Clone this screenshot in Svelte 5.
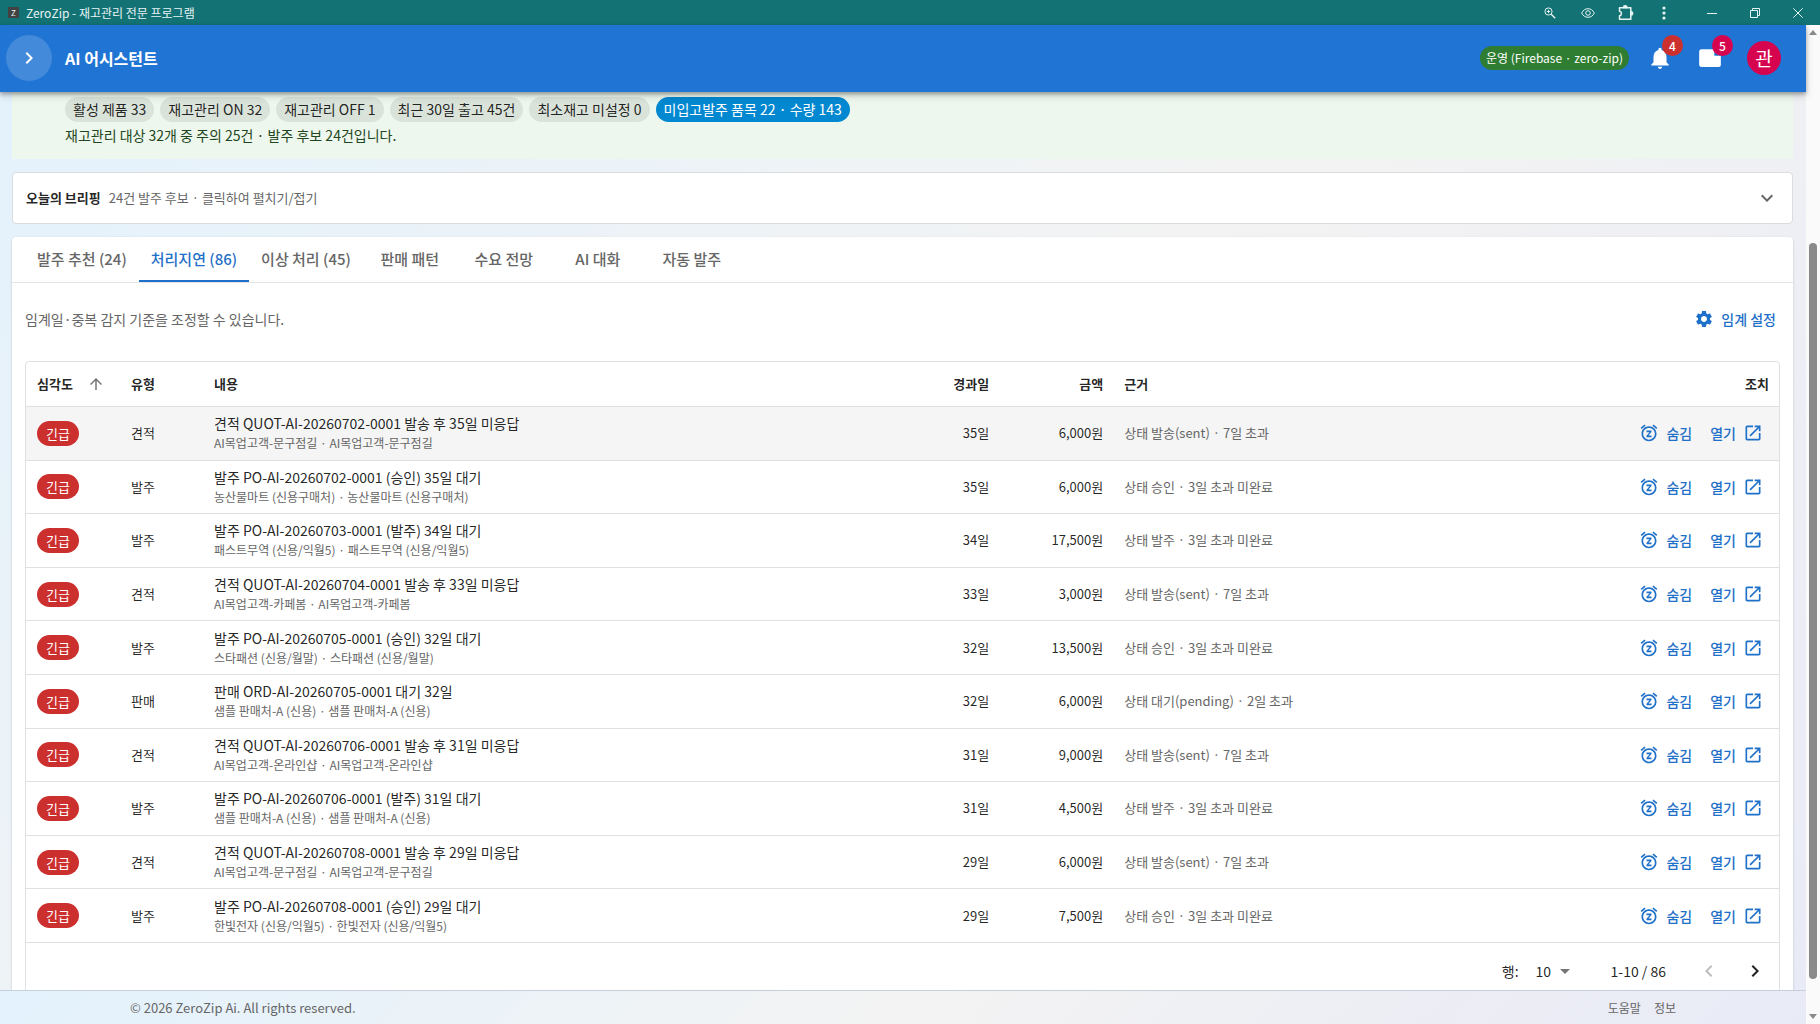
<script lang="ts">
  type Row = {
    kind: string;
    title: string;
    sub: string;
    days: number;
    amount: string;
    reason: string;
  };

  const rows: Row[] = [
    { kind: '견적', title: '견적 QUOT-AI-20260702-0001 발송 후 35일 미응답', sub: 'AI목업고객-문구점길 · AI목업고객-문구점길', days: 35, amount: '6,000원', reason: '상태 발송(sent) · 7일 초과' },
    { kind: '발주', title: '발주 PO-AI-20260702-0001 (승인) 35일 대기', sub: '농산물마트 (신용구매처) · 농산물마트 (신용구매처)', days: 35, amount: '6,000원', reason: '상태 승인 · 3일 초과 미완료' },
    { kind: '발주', title: '발주 PO-AI-20260703-0001 (발주) 34일 대기', sub: '패스트무역 (신용/익월5) · 패스트무역 (신용/익월5)', days: 34, amount: '17,500원', reason: '상태 발주 · 3일 초과 미완료' },
    { kind: '견적', title: '견적 QUOT-AI-20260704-0001 발송 후 33일 미응답', sub: 'AI목업고객-카페봄 · AI목업고객-카페봄', days: 33, amount: '3,000원', reason: '상태 발송(sent) · 7일 초과' },
    { kind: '발주', title: '발주 PO-AI-20260705-0001 (승인) 32일 대기', sub: '스타패션 (신용/월말) · 스타패션 (신용/월말)', days: 32, amount: '13,500원', reason: '상태 승인 · 3일 초과 미완료' },
    { kind: '판매', title: '판매 ORD-AI-20260705-0001 대기 32일', sub: '샘플 판매처-A (신용) · 샘플 판매처-A (신용)', days: 32, amount: '6,000원', reason: '상태 대기(pending) · 2일 초과' },
    { kind: '견적', title: '견적 QUOT-AI-20260706-0001 발송 후 31일 미응답', sub: 'AI목업고객-온라인샵 · AI목업고객-온라인샵', days: 31, amount: '9,000원', reason: '상태 발송(sent) · 7일 초과' },
    { kind: '발주', title: '발주 PO-AI-20260706-0001 (발주) 31일 대기', sub: '샘플 판매처-A (신용) · 샘플 판매처-A (신용)', days: 31, amount: '4,500원', reason: '상태 발주 · 3일 초과 미완료' },
    { kind: '견적', title: '견적 QUOT-AI-20260708-0001 발송 후 29일 미응답', sub: 'AI목업고객-문구점길 · AI목업고객-문구점길', days: 29, amount: '6,000원', reason: '상태 발송(sent) · 7일 초과' },
    { kind: '발주', title: '발주 PO-AI-20260708-0001 (승인) 29일 대기', sub: '한빛전자 (신용/익월5) · 한빛전자 (신용/익월5)', days: 29, amount: '7,500원', reason: '상태 승인 · 3일 초과 미완료' },
  ];

  const tabs = ['발주 추천 (24)', '처리지연 (86)', '이상 처리 (45)', '판매 패턴', '수요 전망', 'AI 대화', '자동 발주'];
  const stats = ['활성 제품 33', '재고관리 ON 32', '재고관리 OFF 1', '최근 30일 출고 45건', '최소재고 미설정 0'];

  let activeTab = $state(1);
  let hovered = $state(0);
  let pageSize = $state('10');
</script>

<div class="window">
  <div class="titlebar">
    <span class="favicon">Z</span>
    <span class="window-title">ZeroZip - 재고관리 전문 프로그램</span>
    <div class="window-tools">
      <button type="button" aria-label="확대">
        <svg width="12" height="12" viewBox="0 0 12 12" fill="none" stroke="currentColor"><circle cx="4.5" cy="4.5" r="3.6" /><path d="M7.2 7.2 11.2 11.2" stroke-width="1.4" /><path d="M4.5 2.8v3.4M2.8 4.5h3.4" /></svg>
      </button>
      <button type="button" aria-label="보기">
        <svg width="14" height="12" viewBox="0 0 14 12" fill="none" stroke="currentColor"><path d="M.7 6C2 3.2 4.3 1.7 7 1.7S12 3.2 13.3 6C12 8.800 9.700 10.300 7 10.300S2 8.800.7 6z" /><circle cx="7" cy="6" r="2.300" /></svg>
      </button>
      <button type="button" aria-label="확장 프로그램">
        <svg width="16" height="16" viewBox="0 0 16 16" fill="none" stroke="currentColor" stroke-width="1.500"><path d="M1.500 2.700h11.300v11.600H1.500v-3.600c2.600-.4 2.600-4 0-4.400z" stroke-linejoin="round" /><path d="M5.500 2.500a1.700 1.700 0 0 1 3.400 0zM13 6.700a1.700 1.700 0 0 1 0 3.400z" fill="currentColor" /></svg>
      </button>
      <button type="button" aria-label="메뉴">
        <svg width="4" height="14" viewBox="0 0 4 14" fill="currentColor"><circle cx="2" cy="2" r="1.600" /><circle cx="2" cy="7" r="1.600" /><circle cx="2" cy="12" r="1.600" /></svg>
      </button>
    </div>
    <div class="window-controls">
      <button type="button" aria-label="최소화">
        <svg width="10" height="10" viewBox="0 0 10 10" fill="none" stroke="currentColor"><path d="M0 5.500h10" /></svg>
      </button>
      <button type="button" aria-label="이전 크기로">
        <svg width="10" height="10" viewBox="0 0 10 10" fill="none" stroke="currentColor"><path d="M.5 2.500h7v7h-7zM2.500 2.500v-2h7v7h-2" /></svg>
      </button>
      <button type="button" aria-label="닫기">
        <svg width="10" height="10" viewBox="0 0 10 10" fill="none" stroke="currentColor"><path d="M.3.3l9.400 9.400M9.700.3.3 9.700" /></svg>
      </button>
    </div>
  </div>

  <div class="viewport">
    <div class="page">
      <header class="appbar">
        <button class="menu-toggle" type="button" aria-label="메뉴 펼치기">
          <svg width="24" height="24" viewBox="0 0 24 24" fill="currentColor"><path d="M10 6 8.590 7.410 13.170 12l-4.580 4.590L10 18l6-6z" /></svg>
        </button>
        <h1>AI 어시스턴트</h1>
        <span class="env-chip">운영 (Firebase · zero-zip)</span>
        <button class="icon-button bell" type="button" aria-label="알림 4건">
          <svg width="26" height="26" viewBox="0 0 24 24" fill="currentColor"><path d="M12 22c1.100 0 2-.9 2-2h-4c0 1.100.890 2 2 2zm6-6v-5c0-3.070-1.640-5.640-4.500-6.320V4c0-.830-.670-1.500-1.500-1.500s-1.500.670-1.500 1.500v.680C7.630 5.360 6 7.920 6 11v5l-2 2v1h16v-1l-2-2z" /></svg>
          <span class="badge">4</span>
        </button>
        <button class="icon-button notes" type="button" aria-label="메모 5건">
          <svg width="26" height="26" viewBox="0 0 24 24" fill="currentColor"><path d="M4 4h12v6h6v8.500c0 1-.8 1.800-1.800 1.800H4c-1.100 0-2-.9-2-2V6c0-1.100.9-2 2-2z" /></svg>
          <span class="badge pink">5</span>
        </button>
        <button class="avatar" type="button">관</button>
      </header>

      <main>
        <section class="summary">
          <div class="chips">
            {#each stats as stat}
              <span class="chip">{stat}</span>
            {/each}
            <span class="chip info">미입고발주 품목 22 · 수량 143</span>
          </div>
          <p>재고관리 대상 32개 중 주의 25건 · 발주 후보 24건입니다.</p>
        </section>

        <button class="briefing" type="button">
          <strong>오늘의 브리핑</strong>
          <span>24건 발주 후보 · 클릭하여 펼치기/접기</span>
          <svg width="24" height="24" viewBox="0 0 24 24" fill="currentColor"><path d="M16.590 8.590 12 13.170 7.410 8.590 6 10l6 6 6-6z" /></svg>
        </button>

        <section class="panel">
          <div class="tabs" role="tablist">
            {#each tabs as tab, i}
              <button
                type="button"
                role="tab"
                aria-selected={activeTab === i}
                class:active={activeTab === i}
                onclick={() => (activeTab = i)}
              >{tab}</button>
            {/each}
          </div>

          <div class="panel-tools">
            <p>임계일·중복 감지 기준을 조정할 수 있습니다.</p>
            <button class="link-button" type="button">
              <svg width="20" height="20" viewBox="0 0 24 24" fill="currentColor"><path d="M19.140 12.940c.040-.3.060-.610.060-.940 0-.320-.020-.640-.070-.940l2.030-1.580c.180-.140.230-.410.120-.610l-1.920-3.320c-.120-.220-.370-.290-.590-.220l-2.390.960c-.5-.380-1.030-.7-1.620-.940l-.360-2.540c-.040-.240-.240-.410-.480-.410h-3.840c-.240 0-.430.170-.470.410l-.360 2.540c-.590.240-1.130.570-1.620.940l-2.390-.960c-.220-.080-.470 0-.590.220L2.740 8.870c-.120.210-.080.470.120.610l2.030 1.580c-.050.3-.090.630-.090.940s.020.640.070.940l-2.030 1.580c-.180.140-.230.410-.120.610l1.920 3.320c.120.220.370.290.590.220l2.390-.960c.5.380 1.030.7 1.620.940l.360 2.540c.050.240.240.410.480.410h3.840c.240 0 .440-.170.470-.410l.360-2.540c.590-.240 1.130-.560 1.620-.940l2.390.960c.220.080.470 0 .590-.220l1.920-3.320c.120-.220.070-.470-.120-.610zM12 15.600c-1.980 0-3.600-1.620-3.600-3.600s1.620-3.600 3.600-3.600 3.600 1.620 3.600 3.600-1.620 3.600-3.600 3.600z" /></svg>
              임계 설정
            </button>
          </div>

          <div class="table-card">
            <table>
              <colgroup>
                <col class="col-level" />
                <col class="col-kind" />
                <col class="col-title" />
                <col class="col-days" />
                <col class="col-amount" />
                <col />
                <col class="col-actions" />
              </colgroup>
              <thead>
                <tr>
                  <th aria-sort="ascending">
                    <span class="sorted">
                      심각도
                      <svg width="18" height="18" viewBox="0 0 24 24" fill="currentColor"><path d="m4 12 1.410 1.410L11 7.830V20h2V7.830l5.580 5.590L20 12l-8-8z" /></svg>
                    </span>
                  </th>
                  <th>유형</th>
                  <th>내용</th>
                  <th class="num">경과일</th>
                  <th class="num">금액</th>
                  <th>근거</th>
                  <th class="num">조치</th>
                </tr>
              </thead>
              <tbody>
                {#each rows as row, i}
                  <tr class:hovered={hovered === i} onmouseenter={() => (hovered = i)}>
                    <td><span class="level">긴급</span></td>
                    <td>{row.kind}</td>
                    <td>
                      <div class="row-title">{row.title}</div>
                      <div class="row-sub">{row.sub}</div>
                    </td>
                    <td class="num">{row.days}일</td>
                    <td class="num">{row.amount}</td>
                    <td class="reason">{row.reason}</td>
                    <td>
                      <div class="actions">
                        <button class="link-button" type="button">
                          <svg width="20" height="20" viewBox="0 0 24 24" fill="currentColor"><path d="m7.880 3.390-1.290-1.530-4.600 3.850 1.290 1.530zM22 5.720l-4.600-3.860-1.290 1.530 4.600 3.860zM12 4c-4.970 0-9 4.030-9 9s4.020 9 9 9c4.970 0 9-4.030 9-9s-4.030-9-9-9zm0 16c-3.870 0-7-3.130-7-7s3.130-7 7-7 7 3.130 7 7-3.130 7-7 7zm-3-9h3.630L9 15.200V17h6v-2h-3.630L15 10.800V9H9z" /></svg>
                          숨김
                        </button>
                        <button class="link-button" type="button">
                          열기
                          <svg width="20" height="20" viewBox="0 0 24 24" fill="currentColor"><path d="M19 19H5V5h7V3H5c-1.110 0-2 .9-2 2v14c0 1.100.890 2 2 2h14c1.100 0 2-.9 2-2v-7h-2zM14 3v2h3.590l-9.830 9.830 1.410 1.410L19 6.410V10h2V3z" /></svg>
                        </button>
                      </div>
                    </td>
                  </tr>
                {/each}
              </tbody>
            </table>

            <div class="pagination">
              <label for="page-size">행:</label>
              <span class="select-wrap">
                <select id="page-size" bind:value={pageSize}>
                  <option>10</option>
                  <option>25</option>
                  <option>50</option>
                </select>
                <svg width="10" height="5" viewBox="0 0 10 5" fill="currentColor"><path d="M0 0h10L5 5z" /></svg>
              </span>
              <span class="range">1-10 / 86</span>
              <button type="button" aria-label="이전 페이지" disabled>
                <svg width="24" height="24" viewBox="0 0 24 24" fill="currentColor"><path d="M15.410 7.410 14 6l-6 6 6 6 1.410-1.410L10.830 12z" /></svg>
              </button>
              <button type="button" aria-label="다음 페이지">
                <svg width="24" height="24" viewBox="0 0 24 24" fill="currentColor"><path d="M10 6 8.590 7.410 13.170 12l-4.580 4.590L10 18l6-6z" /></svg>
              </button>
            </div>
          </div>
        </section>
      </main>

      <footer>
        <span>© 2026 ZeroZip Ai. All rights reserved.</span>
        <nav>
          <a href="#help">도움말</a>
          <a href="#about">정보</a>
        </nav>
      </footer>
    </div>

    <div class="scrollbar" aria-hidden="true">
      <svg width="8" height="5" viewBox="0 0 8 5" fill="currentColor"><path d="M0 5h8L4 0z" /></svg>
      <div class="track"><div class="thumb"></div></div>
      <svg width="8" height="5" viewBox="0 0 8 5" fill="currentColor"><path d="M0 0h8L4 5z" /></svg>
    </div>
  </div>
</div>

<style>
  :global(body) {
    margin: 0;
  }

  .window {
    height: 100vh;
    display: flex;
    flex-direction: column;
    overflow: hidden;
    font-family: "Noto Sans CJK KR", "Noto Sans", sans-serif;
    font-size: 14px;
    line-height: 20px;
    color: rgba(0, 0, 0, 0.87);
  }

  button {
    padding: 0;
    border: none;
    background: none;
    color: inherit;
    font: inherit;
    cursor: pointer;
  }

  svg {
    display: block;
    flex: none;
  }

  .titlebar {
    flex: none;
    height: 25px;
    display: flex;
    align-items: center;
    padding-left: 8px;
    background: #137274;
    color: #e6f4f4;
    font-size: 12px;
  }

  .favicon {
    width: 11px;
    height: 11px;
    margin-right: 7px;
    background: #424242;
    font-size: 8px;
    line-height: 11px;
    text-align: center;
  }

  .window-tools,
  .window-controls {
    display: flex;
  }

  .window-tools {
    margin-left: auto;
  }

  .window-tools button {
    width: 38px;
    height: 25px;
    display: grid;
    place-items: center;
  }

  .window-controls {
    margin-left: 7px;
    padding-right: 1px;
  }

  .window-controls button {
    width: 43px;
    height: 25px;
    display: grid;
    place-items: center;
  }

  .viewport {
    flex: 1;
    min-height: 0;
    display: flex;
  }

  .page {
    flex: 1;
    min-width: 0;
    display: flex;
    flex-direction: column;
    background: linear-gradient(135deg, #e3f2fd 0%, #f3f3f3 50%, #e8eaf6 100%);
  }

  .appbar {
    flex: none;
    position: relative;
    z-index: 1;
    box-sizing: border-box;
    height: 67px;
    display: flex;
    align-items: center;
    padding: 0 25px 1px 6px;
    background: #1f74d4;
    color: #fff;
    box-shadow: 0 2px 4px rgba(0, 0, 0, 0.3), 0 4px 8px rgba(0, 0, 0, 0.14);
  }

  .menu-toggle {
    width: 46px;
    height: 46px;
    display: grid;
    place-items: center;
    border-radius: 50%;
    background: rgba(255, 255, 255, 0.16);
  }

  h1 {
    margin: 0 auto 0 13px;
    font-size: 16px;
    font-weight: 700;
    line-height: 24px;
  }

  .env-chip {
    padding: 0 6px;
    border-radius: 12px;
    background: #2e7d32;
    font-size: 12px;
    line-height: 24px;
  }

  .icon-button {
    position: relative;
    width: 26px;
    height: 26px;
  }

  .bell {
    margin-left: 18px;
  }

  .notes {
    margin-left: 24px;
  }

  .badge {
    position: absolute;
    top: -10px;
    right: -10px;
    width: 21px;
    height: 21px;
    border-radius: 50%;
    background: #cc302e;
    font-size: 12px;
    font-weight: 500;
    line-height: 21px;
    text-align: center;
  }

  .badge.pink {
    background: #d6044f;
  }

  .avatar {
    width: 34px;
    height: 34px;
    margin-left: 24px;
    border-radius: 50%;
    background: #d6044f;
    font-size: 19px;
    line-height: 34px;
  }

  main {
    flex: 1;
    min-height: 0;
    display: flex;
    flex-direction: column;
    gap: 13px;
    padding: 0 13px 0 12px;
    overflow: hidden;
  }

  .summary {
    flex: none;
    padding: 5px 53px 14px 53px;
    background: #edf7ed;
  }

  .chips {
    display: flex;
    gap: 6px;
  }

  .chip {
    padding: 0 8px;
    border-radius: 13px;
    background: #dae3da;
    font-size: 14px;
    line-height: 25px;
  }

  .chip.info {
    background: #0288d1;
    color: #fff;
  }

  .summary p {
    margin: 3px 0 0;
    color: #1e4620;
  }

  .briefing {
    flex: none;
    height: 52px;
    display: flex;
    align-items: center;
    gap: 8px;
    padding: 0 13px;
    border: 1px solid #dcdcde;
    border-radius: 4px;
    background: #fff;
    text-align: left;
  }

  .briefing strong {
    font-size: 13px;
    font-weight: 700;
  }

  .briefing span {
    color: #666;
    font-size: 13px;
  }

  .briefing svg {
    margin-left: auto;
    color: #666;
  }

  .panel {
    flex: none;
    padding-bottom: 13px;
    border-radius: 4px;
    background: #fff;
    box-shadow: 0 1px 3px rgba(0, 0, 0, 0.16);
  }

  .tabs {
    display: flex;
    padding-left: 13px;
    border-bottom: 1px solid #e4e4e4;
  }

  .tabs button {
    min-width: 94px;
    height: 45px;
    padding: 0 12px;
    border-bottom: 2px solid transparent;
    color: #666;
    font-size: 15px;
    font-weight: 500;
  }

  .tabs button.active {
    border-bottom-color: #1f70c8;
    color: #1f70c8;
  }

  .panel-tools {
    display: flex;
    align-items: center;
    justify-content: space-between;
    height: 72px;
    padding: 0 17px 0 13px;
  }

  .panel-tools p {
    margin: 0;
    color: #666;
  }

  .link-button {
    display: flex;
    align-items: center;
    gap: 7px;
    color: #1f70c8;
    font-weight: 500;
  }

  .table-card {
    margin: 6px 13px 0;
    border: 1px solid #e0e0e0;
    border-radius: 4px;
  }

  table {
    width: 100%;
    border-collapse: separate;
    border-spacing: 0;
    table-layout: fixed;
  }

  .col-level {
    width: 94px;
  }

  .col-kind {
    width: 83px;
  }

  .col-title {
    width: 40%;
  }

  .col-days {
    width: 95px;
  }

  .col-amount {
    width: 114px;
  }

  .col-actions {
    width: 190px;
  }

  tbody {
    height: 536px;
  }

  th,
  td {
    padding: 0 10px 0 11px;
    border-bottom: 1px solid #e0e0e0;
    font-size: 13px;
    text-align: left;
    vertical-align: middle;
  }

  th {
    height: 44px;
    font-weight: 700;
  }

  .num {
    text-align: right;
  }

  .sorted {
    display: flex;
    align-items: center;
    gap: 14px;
  }

  .sorted svg {
    color: #757575;
  }

  tr.hovered td {
    background: #f5f5f5;
  }

  .level {
    display: inline-block;
    padding: 0 9px;
    border-radius: 13px;
    background: #cc302e;
    color: #fff;
    line-height: 25px;
  }

  .row-title {
    font-size: 14px;
  }

  .row-sub {
    color: #666;
    font-size: 12px;
  }

  .reason {
    color: #666;
  }

  .actions {
    display: flex;
    justify-content: flex-end;
    gap: 18px;
    padding-right: 6px;
    font-size: 14px;
  }

  .pagination {
    display: flex;
    align-items: center;
    justify-content: flex-end;
    height: 56px;
    padding-right: 12px;
  }

  .select-wrap {
    display: flex;
    align-items: center;
    margin: 0 41px 0 17px;
    color: #757575;
  }

  .select-wrap select {
    appearance: none;
    width: 24px;
    padding: 0;
    border: none;
    background: none;
    color: rgba(0, 0, 0, 0.87);
    font: inherit;
  }

  .range {
    margin-right: 31px;
  }

  .pagination button + button {
    margin-left: 22px;
  }

  .pagination button:disabled {
    color: #bdbdbd;
  }

  footer {
    flex: none;
    height: 33px;
    display: flex;
    align-items: center;
    justify-content: space-between;
    padding: 0 130px;
    border-top: 1px solid #c9cfda;
    background: linear-gradient(135deg, #e3f2fd 0%, #f3f3f3 50%, #e8eaf6 100%);
    color: #666;
    font-size: 13px;
  }

  nav {
    display: flex;
    gap: 13px;
    font-size: 12px;
  }

  nav a {
    color: inherit;
    text-decoration: none;
  }

  .scrollbar {
    flex: none;
    width: 14px;
    display: flex;
    flex-direction: column;
    align-items: center;
    box-sizing: border-box;
    padding: 5px 0;
    background: #fafafa;
    color: #8a8a8a;
  }

  .track {
    flex: 1;
    width: 8px;
    padding: 208px 0 35px;
    display: flex;
  }

  .thumb {
    flex: 1;
    border-radius: 4px;
    background: #8a8a8a;
  }
</style>
